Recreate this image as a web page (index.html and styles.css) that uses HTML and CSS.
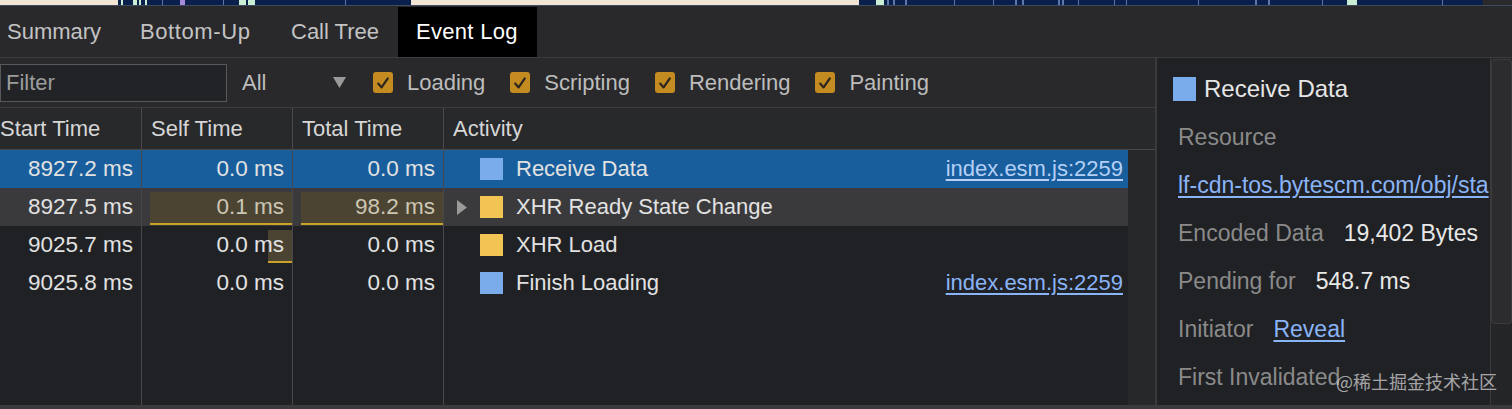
FILE: index.html
```html
<!DOCTYPE html>
<html>
<head>
<meta charset="utf-8">
<title>Event Log</title>
<link rel="stylesheet" href="styles.css">
</head>
<body>
<div class="overview">
  <div class="seg beige" style="width:118px"></div>
  <div class="seg navy" style="width:293px">
    <i class="mark" style="left:3px;width:2px"></i>
    <i class="mark" style="left:15px;width:4px"></i>
    <i class="mark" style="left:21px;width:2px"></i>
    <i class="mark" style="left:27px;width:2px"></i>
    <i class="mark t" style="left:44px;width:1px"></i>
    <i class="mark p" style="left:62px;width:5px"></i>
    <i class="mark t" style="left:105px;width:1px"></i>
    <i class="mark" style="left:121px;width:7px"></i>
    <i class="mark" style="left:130px;width:7px"></i>
    <i class="mark t" style="left:227px;width:1px"></i>
  </div>
  <div class="seg beige" style="width:448px"></div>
  <div class="seg navy" style="width:624px">
    <i class="mark" style="left:17px;width:8px"></i>
    <i class="mark t" style="left:28px;width:2px"></i>
    <i class="mark t" style="left:34px;width:2px"></i>
    <i class="mark t" style="left:46px;width:2px"></i>
    <i class="mark t" style="left:95px;width:1px"></i>
    <i class="mark t" style="left:134px;width:1px"></i>
    <i class="mark t" style="left:156px;width:2px"></i>
    <i class="mark t" style="left:163px;width:2px"></i>
    <i class="mark t" style="left:199px;width:2px"></i>
    <i class="mark t" style="left:203px;width:2px"></i>
    <i class="mark t" style="left:219px;width:1px"></i>
    <i class="mark t" style="left:255px;width:1px"></i>
    <i class="mark t" style="left:267px;width:1px"></i>
    <i class="mark t" style="left:339px;width:1px"></i>
    <i class="mark t" style="left:396px;width:2px"></i>
    <i class="mark t" style="left:409px;width:2px"></i>
    <i class="mark t" style="left:463px;width:1px"></i>
    <i class="mark" style="left:488px;width:10px"></i>
    <i class="mark t" style="left:583px;width:1px"></i>
  </div>
  <div class="seg dark"></div>
</div>

<div class="tabbar">
  <div class="tabs">
    <div class="tab t-summary">Summary</div>
    <div class="tab t-bottom">Bottom-Up</div>
    <div class="tab t-call">Call Tree</div>
    <div class="tab t-log active">Event Log</div>
  </div>
</div>

<div class="main">
  <div class="left">
    <div class="toolbar">
      <div class="filter">Filter</div>
      <div class="select">
        <span>All</span>
        <svg class="arrow" width="13" height="11" viewBox="0 0 13 11"><polygon points="0,0 13,0 6.5,11" fill="#9a9a9a"/></svg>
      </div>
      <div class="cb"><span class="box"><svg width="14" height="14" viewBox="0 0 14 14"><path d="M2.2 7.6 L5.6 11.4 L11.8 2.4" fill="none" stroke="#2b2620" stroke-width="2.2" stroke-linecap="round" stroke-linejoin="round"/></svg></span>Loading</div>
      <div class="cb"><span class="box"><svg width="14" height="14" viewBox="0 0 14 14"><path d="M2.2 7.6 L5.6 11.4 L11.8 2.4" fill="none" stroke="#2b2620" stroke-width="2.2" stroke-linecap="round" stroke-linejoin="round"/></svg></span>Scripting</div>
      <div class="cb"><span class="box"><svg width="14" height="14" viewBox="0 0 14 14"><path d="M2.2 7.6 L5.6 11.4 L11.8 2.4" fill="none" stroke="#2b2620" stroke-width="2.2" stroke-linecap="round" stroke-linejoin="round"/></svg></span>Rendering</div>
      <div class="cb"><span class="box"><svg width="14" height="14" viewBox="0 0 14 14"><path d="M2.2 7.6 L5.6 11.4 L11.8 2.4" fill="none" stroke="#2b2620" stroke-width="2.2" stroke-linecap="round" stroke-linejoin="round"/></svg></span>Painting</div>
    </div>

    <div class="table">
      <div class="thead">
        <div class="th first">Start Time</div>
        <div class="th">Self Time</div>
        <div class="th">Total Time</div>
        <div class="th last">Activity</div>
      </div>
      <div class="tbody">
        <div class="rows">
          <div class="row selected">
            <div class="td"><span class="txt">8927.2 ms</span></div>
            <div class="td"><span class="txt">0.0 ms</span></div>
            <div class="td"><span class="txt">0.0 ms</span></div>
            <div class="td act">
              <span class="tog"></span>
              <span class="sq blue"></span>
              <span class="name">Receive Data</span>
              <span class="link">index.esm.js:2259</span>
            </div>
          </div>
          <div class="row hover">
            <div class="td"><span class="txt">8927.5 ms</span></div>
            <div class="td"><i class="bar" style="width:142px"></i><span class="txt dim">0.1 ms</span></div>
            <div class="td"><i class="bar" style="width:142px"></i><span class="txt dim">98.2 ms</span></div>
            <div class="td act">
              <span class="tog"><svg width="10" height="15" viewBox="0 0 10 15"><polygon points="0,0 10,7.5 0,15" fill="#9a9a9a"/></svg></span>
              <span class="sq yellow"></span>
              <span class="name">XHR Ready State Change</span>
            </div>
          </div>
          <div class="row">
            <div class="td"><span class="txt">9025.7 ms</span></div>
            <div class="td"><i class="bar" style="width:24px"></i><span class="txt">0.0 ms</span></div>
            <div class="td"><span class="txt">0.0 ms</span></div>
            <div class="td act">
              <span class="tog"></span>
              <span class="sq yellow"></span>
              <span class="name">XHR Load</span>
            </div>
          </div>
          <div class="row">
            <div class="td"><span class="txt">9025.8 ms</span></div>
            <div class="td"><span class="txt">0.0 ms</span></div>
            <div class="td"><span class="txt">0.0 ms</span></div>
            <div class="td act">
              <span class="tog"></span>
              <span class="sq blue"></span>
              <span class="name">Finish Loading</span>
              <span class="link">index.esm.js:2259</span>
            </div>
          </div>
          <div class="row filler">
            <div class="td"></div>
            <div class="td"></div>
            <div class="td"></div>
            <div class="td act"></div>
          </div>
        </div>
        <div class="gutter"></div>
      </div>
    </div>
  </div>

  <div class="details">
    <div class="title"><span class="sq blue big"></span>Receive Data</div>
    <div class="item"><span class="label">Resource</span></div>
    <div class="item"><span class="link">lf-cdn-tos.bytescm.com/obj/sta</span></div>
    <div class="item"><span class="label">Encoded Data</span><span class="val">19,402 Bytes</span></div>
    <div class="item"><span class="label">Pending for</span><span class="val">548.7 ms</span></div>
    <div class="item"><span class="label">Initiator</span><span class="link">Reveal</span></div>
    <div class="item"><span class="label">First Invalidated</span></div>
  </div>

  <div class="vscroll"><div class="thumb"></div></div>
</div>
<div class="bottombar"></div>
<div class="watermark">@稀土掘金技术社区</div>
</body>
</html>
```

FILE: styles.css
```css
* { box-sizing: border-box; margin: 0; padding: 0; }
html, body { width: 1512px; height: 409px; overflow: hidden; }
body {
  background: #202124;
  font-family: "Liberation Sans", Arial, sans-serif;
  font-size: 22px;
  color: #e2e2e2;
  position: relative;
}

/* overview strip */
.overview { display: flex; height: 6px; border-bottom: 1px solid #3f4a5c; background: #29292b; }
.seg { position: relative; height: 5px; flex: none; }
.beige { background: #f3e5d3; }
.navy { background: #0b1f4d; }
.dark { background: #2a2a2c; flex: 1; }
.mark { position: absolute; top: 0; height: 5px; background: #c9eed3; }
.mark.p { background: #a48ad8; }
.mark.t { background: #5d78ad; }

/* tabs */
.tabbar { height: 52px; background: #29292b; border-bottom: 1px solid #3c3c3e; padding-top: 1px; }
.tabs { display: flex; margin-left: -11px; height: 50px; }
.tab { padding-left: 18px; line-height: 50px; color: #c3c3c3; white-space: nowrap; flex: none; }
.t-summary { width: 133px; }
.t-bottom { width: 151px; letter-spacing: 0.6px; }
.t-call { width: 125px; }
.t-log { width: 139px; letter-spacing: 0.3px; }
.tab.active { background: #000; color: #fff; }

/* main */
.main { display: flex; height: 347px; }
.left {
  width: 1157px;
  flex: none;
  border-right: 2px solid #3a3a3c;
  display: flex;
  flex-direction: column;
  background: #29292b;
}

.toolbar {
  height: 50px;
  flex: none;
  border-bottom: 1px solid #3c3c3e;
  display: flex;
  align-items: center;
}
.filter {
  width: 227px;
  height: 38px;
  border: 1px solid #58585a;
  background: #222326;
  color: #9c9c9c;
  padding-left: 5px;
  line-height: 36px;
}
.select {
  display: flex;
  align-items: center;
  justify-content: space-between;
  width: 104px;
  margin-left: 15px;
  margin-right: 27px;
  color: #bdbdbd;
}
.cb { display: flex; align-items: center; margin-right: 25px; color: #bdbdbd; }
.box {
  width: 20px;
  height: 21px;
  border-radius: 3px;
  background: #c48b20;
  margin-right: 14px;
  display: flex;
  align-items: center;
  justify-content: center;
}

/* table */
.table { flex: 1; display: flex; flex-direction: column; }
.thead {
  display: grid;
  grid-template-columns: 142px 151px 151px 1fr;
  height: 42px;
  flex: none;
  border-bottom: 1px solid #4a4a4c;
  background: #28292b;
}
.th { border-right: 1px solid #4a4a4c; padding-left: 9px; line-height: 41px; color: #d6d6d6; }
.th.first { padding-left: 0; }
.th.last { border-right: 0; }

.tbody { flex: 1; display: flex; background: #202124; }
.rows { flex: 1; display: flex; flex-direction: column; }
.row {
  display: grid;
  grid-template-columns: 142px 151px 151px 1fr;
  height: 38px;
  flex: none;
}
.row.filler { flex: 1; }
.row.selected { background: #185e9d; }
.row.hover { background: #3a3a3c; }
.td {
  border-right: 1px solid #48484a;
  position: relative;
  text-align: right;
  padding-right: 8px;
  line-height: 38px;
  white-space: nowrap;
  font-size: 22.5px;
}
.txt { position: relative; }
.txt.dim { color: #cdc6b4; }
.bar {
  position: absolute;
  right: 0;
  top: 4px;
  bottom: 1px;
  background: #4c4432;
  border-bottom: 2px solid #c9a227;
}
.td.act {
  border-right: 0;
  text-align: left;
  display: flex;
  align-items: center;
  padding-left: 13px;
  padding-right: 5px;
  font-size: 22px;
}
.tog { width: 23px; flex: none; display: flex; align-items: center; }
.sq { width: 23px; height: 22px; margin-right: 13px; flex: none; }
.blue { background: #7aabeb; }
.yellow { background: #f1c453; }
.name { flex: 1; }
.link { color: #8ab4f8; text-decoration: underline; text-underline-offset: 3px; }
.row.selected .link { color: #b4d0f7; }
.gutter { width: 27px; flex: none; background: #27282a; }

/* details */
.details {
  width: 333px;
  flex: none;
  background: #202124;
  padding-left: 16px;
  overflow: hidden;
  font-size: 23px;
}
.title { height: 55px; padding-top: 7px; display: flex; align-items: center; color: #e6e6e6; font-size: 24px; }
.sq.big { height: 24px; margin-right: 8px; }
.item { height: 48px; display: flex; align-items: center; padding-left: 5px; white-space: nowrap; }
.label { color: #8a8a8a; margin-right: 20px; }
.val { color: #e8e8e8; }

.vscroll { width: 22px; flex: none; border-left: 1px solid #3a3a3c; background: #242527; padding-top: 1px; }
.thumb { height: 265px; background: #2c2c2e; border: 1px solid #3b3b3d; border-radius: 3px; }

.bottombar { height: 4px; background: #3a3a3c; }

.watermark {
  position: absolute;
  left: 1336px;
  top: 372px;
  font-family: "Noto Sans CJK SC", sans-serif;
  font-size: 18px;
  line-height: 18px;
  color: rgba(255, 255, 255, 0.6);
  white-space: nowrap;
}
```
